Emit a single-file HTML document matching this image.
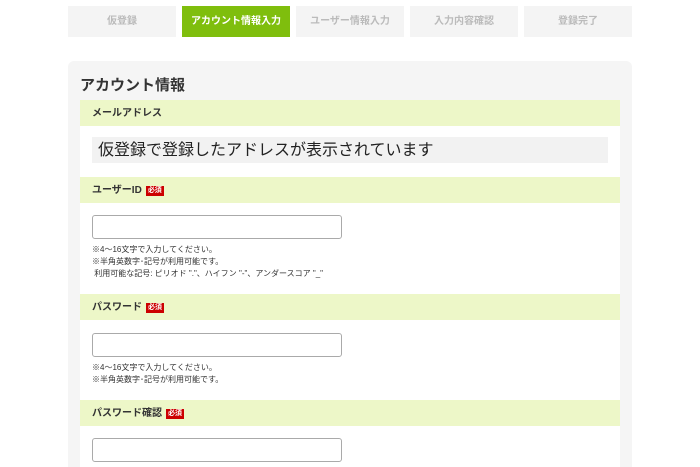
<!DOCTYPE html><html><head><meta charset="utf-8"><style>
html,body{margin:0;width:700px;height:467px;overflow:hidden}
body{background:#fff;font-family:"Liberation Sans","Noto Sans CJK JP",sans-serif;position:relative}
.s{position:absolute;top:6px;height:31px;width:108px;background:#f4f4f4;color:#bbb;font-size:10px;line-height:31px;text-align:center;font-weight:bold}
.a{background:#7fbe0d;color:#fff}
.card{position:absolute;left:68px;top:61px;width:564px;height:406px;background:#f5f5f5;border-radius:6px 6px 0 0}
.t{position:absolute;left:80px;top:74px;font-size:15px;font-weight:bold;color:#333}
.h{position:absolute;left:80px;width:540px;height:26px;background:#edf7c8;font-size:10px;font-weight:bold;color:#333;line-height:27px;text-indent:12px}
.w{position:absolute;left:80px;width:540px;background:#fff}
.r{display:inline-block;background:#c00;color:#fff;font-size:7px;line-height:10px;padding:0 2px;text-indent:0;margin-left:4px;vertical-align:1px}
.i{position:absolute;left:92px;width:248px;height:22px;border:1px solid #aaa;border-radius:3px;background:#fff}
.n{position:absolute;left:92px;font-size:8px;color:#333;line-height:12px}
</style></head><body>
<div class="s" style="left:68px">仮登録</div>
<div class="s a" style="left:182px">アカウント情報入力</div>
<div class="s" style="left:296px">ユーザー情報入力</div>
<div class="s" style="left:410px">入力内容確認</div>
<div class="s" style="left:524px">登録完了</div>
<div class="card"></div>
<div class="t">アカウント情報</div>
<div class="h" style="top:100px">メールアドレス</div>
<div class="w" style="top:126px;height:51px"></div>
<div style="position:absolute;left:92px;top:137px;width:516px;height:26px;background:#f2f2f2;font-size:16px;line-height:27px;text-indent:6px;color:#222">仮登録で登録したアドレスが表示されています</div>
<div class="h" style="top:177px">ユーザーID<span class="r">必須</span></div>
<div class="w" style="top:203px;height:91px"></div>
<div class="i" style="top:215px"></div>
<div class="n" style="top:244px">※4～16文字で入力してください。<br>※半角英数字･記号が利用可能です。<br>&nbsp;利用可能な記号: ピリオド "."、ハイフン "-"、アンダースコア "_"</div>
<div class="h" style="top:294px">パスワード<span class="r">必須</span></div>
<div class="w" style="top:320px;height:80px"></div>
<div class="i" style="top:333px"></div>
<div class="n" style="top:362px">※4～16文字で入力してください。<br>※半角英数字･記号が利用可能です。</div>
<div class="h" style="top:400px">パスワード確認<span class="r">必須</span></div>
<div class="w" style="top:426px;height:41px"></div>
<div class="i" style="top:438px"></div>
</body></html>
